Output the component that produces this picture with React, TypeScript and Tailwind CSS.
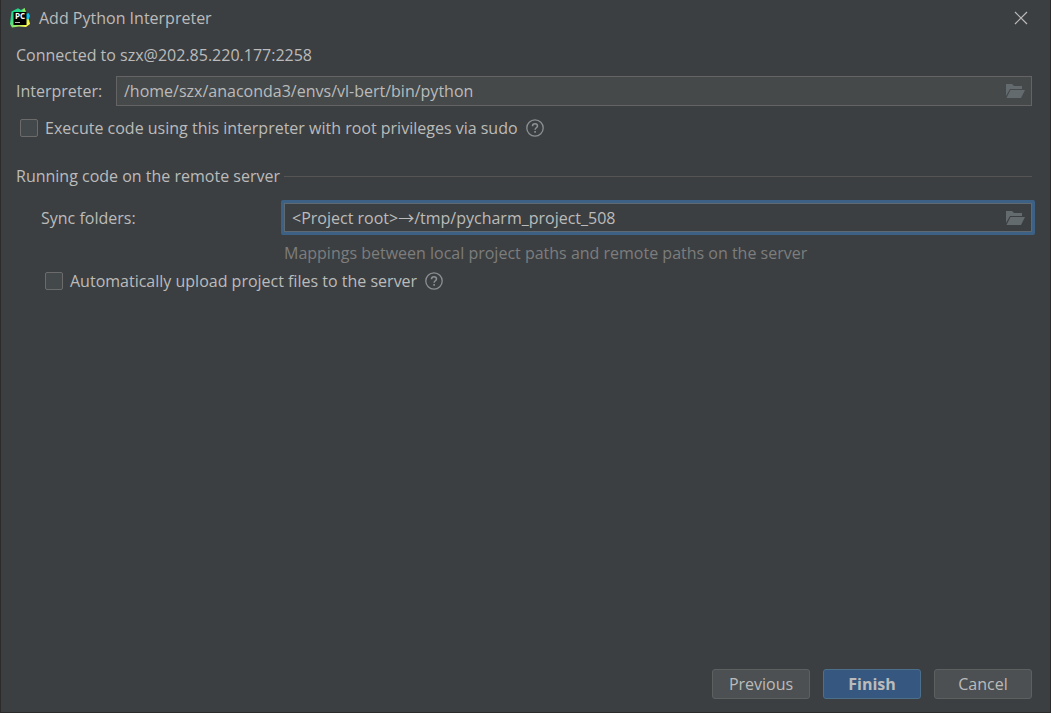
import { useState } from 'react';

const PyCharmLogo = () => (
  <svg width="20" height="20" viewBox="0 0 20 20" aria-hidden="true">
    <defs>
      <linearGradient id="pcGreen" x1="0" y1="0" x2="1" y2="1">
        <stop offset="0.3" stopColor="#21d789" />
        <stop offset="0.85" stopColor="#fcf84a" />
      </linearGradient>
    </defs>
    <path d="M1.500 3.500 8 .3 11 2 14.500 0 15.500 4 18 8 20 16 16 19 9 18.500 2 19.500 0 16Z" fill="url(#pcGreen)" />
    <path d="M12 3 14.500 0 16 4Z" fill="#9be85a" />
    <path d="M16 6 18.500 5 20 8 18.500 11.500 16 11Z" fill="#07c3f2" />
    <rect x="3.500" y="4" width="13" height="13" fill="#000" />
    <text x="10" y="11" textAnchor="middle" fill="#fff" className="font-['Open_Sans',sans-serif] text-[8px] font-bold">PC</text>
    <path d="M5 14.500h5" stroke="#bbb" strokeWidth="1" />
  </svg>
);

const FolderIcon = () => (
  <svg width="19" height="16" viewBox="0 0 19 16" fill="#646b6f" aria-hidden="true">
    <path d="M0 1h6l2 2h8v3H4L0 13Z" />
    <path d="M4.500 7H19l-4 8H.5Z" />
  </svg>
);

const HelpButton = ({ label }: { label: string }) => (
  <button type="button" aria-label={label} className="text-[#8b9093]">
    <svg width="18" height="18" viewBox="0 0 18 18" fill="none" stroke="currentColor" strokeWidth="1.300">
      <circle cx="9" cy="9" r="8.200" />
      <path d="M6.500 7.200C6.500 5.500 7.500 4.700 9 4.700s2.500.9 2.500 2.300c0 1.700-2.400 1.900-2.400 3.800" strokeWidth="1.500" />
      <path d="M9.100 12v1.700" strokeWidth="1.600" />
    </svg>
  </button>
);

const checkboxClass = 'size-[18px] shrink-0 appearance-none rounded-xs border border-[#6b6b6b] bg-[#43494a] checked:bg-[#365880]';
const buttonClass = 'h-[30px] w-[98px] rounded-[3px] border';

const App = () => {
  const [interpreter, setInterpreter] = useState('/home/szx/anaconda3/envs/vl-bert/bin/python');
  const [syncFolders, setSyncFolders] = useState('<Project root>→/tmp/pycharm_project_508');
  const [useSudo, setUseSudo] = useState(false);
  const [autoUpload, setAutoUpload] = useState(false);

  return (
    <div className="flex min-h-screen flex-col border-x border-b border-[#2b2b2b] bg-[#3c3f41] font-['Open_Sans','Noto_Sans_CJK_SC',sans-serif] text-base leading-6 text-[#bbbbbb]">
      <header className="flex h-9 items-center justify-between pr-[22px] pl-[9px]">
        <div className="flex items-center gap-[9px]">
          <PyCharmLogo />
          <h1>Add Python Interpreter</h1>
        </div>
        <button type="button" aria-label="Close">
          <svg width="14" height="14" viewBox="0 0 14 14" stroke="currentColor" strokeWidth="1.200">
            <path d="M1 1l12 12M13 1 1 13" />
          </svg>
        </button>
      </header>

      <main className="flex-1 pt-[7px] pr-[18px] pl-[15px]">
        <p>Connected to szx@202.85.220.177:2258</p>

        <div className="mt-[9px] flex items-center">
          <label htmlFor="interpreter" className="w-[100px] shrink-0">Interpreter:</label>
          <div className="flex h-[30px] flex-1 items-center border border-[#646464] bg-[#45494a] pr-1.5 pl-[7px]">
            <input
              id="interpreter"
              value={interpreter}
              onChange={(e) => setInterpreter(e.target.value)}
              className="min-w-0 flex-1 bg-transparent outline-none"
            />
            <button type="button" aria-label="Browse interpreter"><FolderIcon /></button>
          </div>
        </div>

        <div className="mt-2.5 flex items-center gap-2 pl-1">
          <label className="flex items-center gap-[7px]">
            <input type="checkbox" checked={useSudo} onChange={(e) => setUseSudo(e.target.checked)} className={checkboxClass} />
            Execute code using this interpreter with root privileges via sudo
          </label>
          <HelpButton label="About sudo" />
        </div>

        <section className="mt-6">
          <div className="flex items-center gap-1">
            <h2>Running code on the remote server</h2>
            <div className="h-px flex-1 bg-[#555555]" />
          </div>

          <div className="mt-3 -mr-[3px] flex items-center pl-[25px]">
            <label htmlFor="sync" className="w-[240px] shrink-0">Sync folders:</label>
            <div className="flex-1 rounded-xs border-[3px] border-[#3d6185]">
              <div className="flex h-[29px] items-center border border-[#5e6971] pr-1.5 pl-[7px]">
                <input
                  id="sync"
                  value={syncFolders}
                  onChange={(e) => setSyncFolders(e.target.value)}
                  className="min-w-0 flex-1 bg-transparent outline-none"
                />
                <button type="button" aria-label="Browse sync folders"><FolderIcon /></button>
              </div>
            </div>
          </div>

          <p className="mt-1.5 pl-[268px] text-[#7d7d7d]">Mappings between local project paths and remote paths on the server</p>

          <div className="mt-1 flex items-center gap-2 pl-[29px]">
            <label className="flex items-center gap-[7px]">
              <input type="checkbox" checked={autoUpload} onChange={(e) => setAutoUpload(e.target.checked)} className={checkboxClass} />
              Automatically upload project files to the server
            </label>
            <HelpButton label="About automatic upload" />
          </div>
        </section>
      </main>

      <footer className="flex justify-end gap-[13px] pr-[18px] pb-[13px]">
        <button type="button" className={`${buttonClass} border-[#5e6060] bg-[#4c5052]`}>Previous</button>
        <button type="button" className={`${buttonClass} border-[#4c708c] bg-[#365880] font-bold`}>Finish</button>
        <button type="button" className={`${buttonClass} border-[#5e6060] bg-[#4c5052]`}>Cancel</button>
      </footer>
    </div>
  );
};

export default App;
